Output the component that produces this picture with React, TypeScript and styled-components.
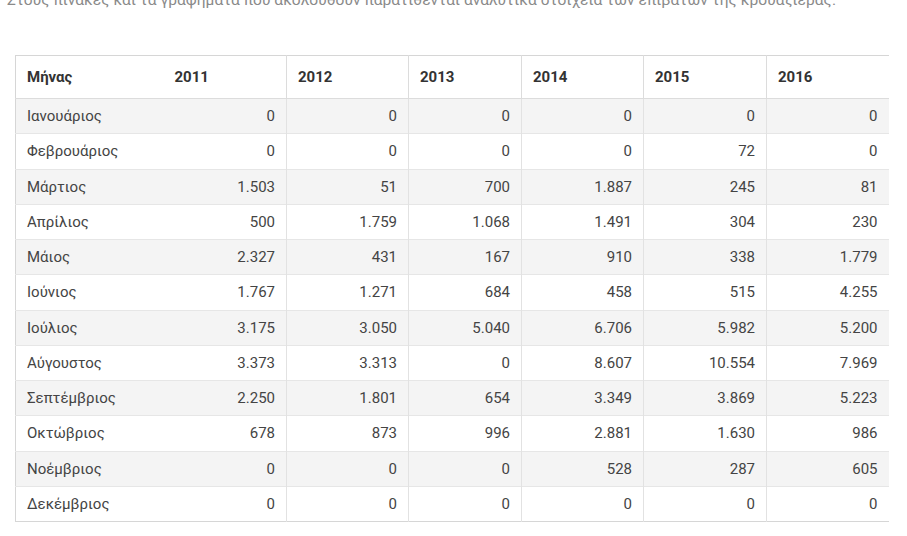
import styled, { createGlobalStyle } from "styled-components";

const years = ["2011", "2012", "2013", "2014", "2015", "2016"];

const rows: [string, string[]][] = [
  ["Ιανουάριος", ["0", "0", "0", "0", "0", "0"]],
  ["Φεβρουάριος", ["0", "0", "0", "0", "72", "0"]],
  ["Μάρτιος", ["1.503", "51", "700", "1.887", "245", "81"]],
  ["Απρίλιος", ["500", "1.759", "1.068", "1.491", "304", "230"]],
  ["Μάιος", ["2.327", "431", "167", "910", "338", "1.779"]],
  ["Ιούνιος", ["1.767", "1.271", "684", "458", "515", "4.255"]],
  ["Ιούλιος", ["3.175", "3.050", "5.040", "6.706", "5.982", "5.200"]],
  ["Αύγουστος", ["3.373", "3.313", "0", "8.607", "10.554", "7.969"]],
  ["Σεπτέμβριος", ["2.250", "1.801", "654", "3.349", "3.869", "5.223"]],
  ["Οκτώβριος", ["678", "873", "996", "2.881", "1.630", "986"]],
  ["Νοέμβριος", ["0", "0", "0", "528", "287", "605"]],
  ["Δεκέμβριος", ["0", "0", "0", "0", "0", "0"]],
];

// column widths measured from the screenshot
const widths = [148, 123, 122, 113, 122, 123, 122];

const App = () => {
  return (
    <Page>
      <GlobalStyle />
      <Intro>
        Στους πίνακες και τα γραφήματα που ακολουθούν παρατίθενται αναλυτικά
        στοιχεία των επιβατών της κρουαζιέρας.
      </Intro>
      <Table>
        <colgroup>
          {widths.map((w, i) => (
            <col key={i} style={{ width: w }} />
          ))}
        </colgroup>
        <thead>
          <tr>
            <HeadCell>Μήνας</HeadCell>
            {years.map((y, i) => (
              <HeadCell key={y} $divided={i > 0}>
                {y}
              </HeadCell>
            ))}
          </tr>
        </thead>
        <tbody>
          {rows.map(([month, values], r) => (
            <Row key={month} $striped={r % 2 === 0}>
              <Cell>{month}</Cell>
              {values.map((v, i) => (
                <Cell key={i} $num $divided={i > 0}>
                  {v}
                </Cell>
              ))}
            </Row>
          ))}
        </tbody>
      </Table>
    </Page>
  );
};

export default App;

const GlobalStyle = createGlobalStyle`
  html, body {
    margin: 0;
    padding: 0;
    background: #fff;
  }
  body {
    font-family: Roboto, "Liberation Sans", sans-serif;
    overflow: hidden;
  }
`;

const Page = styled.main`
  padding: 0 0 0 15px;
  width: 907px;
  height: 536px;
  box-sizing: border-box;
  overflow: hidden;
`;

const Intro = styled.p`
  margin: -10px 0 0 -8px;
  height: 65px;
  font-size: 15.5px;
  line-height: 20px;
  letter-spacing: 0.04px;
  color: #8a8a8a;
  white-space: nowrap;
`;

const Table = styled.table`
  border-collapse: collapse;
  table-layout: fixed;
  width: 873px;
  font-size: 15px;
  color: #444;
  border-top: 1px solid #d6d6d6;
  border-left: 1px solid #d6d6d6;
  border-bottom: 1px solid #d6d6d6;
`;

const HeadCell = styled.th<{ $divided?: boolean }>`
  height: 42px;
  padding: 0 11px 0 11px;
  text-align: left;
  font-weight: 700;
  color: #333;
  border-left: ${(p) => (p.$divided ? "1px solid #dcdcdc" : "none")};
  border-bottom: 1px solid #dcdcdc;
`;

const Row = styled.tr<{ $striped?: boolean }>`
  background: ${(p) => (p.$striped ? "#f4f4f4" : "#fff")};
`;

const Cell = styled.td<{ $num?: boolean; $divided?: boolean }>`
  height: 34.25px;
  padding: 0 11px;
  text-align: ${(p) => (p.$num ? "right" : "left")};
  border-left: ${(p) => (p.$divided ? "1px solid #e2e2e2" : "none")};
  border-top: 1px solid #e6e6e6;
`;
